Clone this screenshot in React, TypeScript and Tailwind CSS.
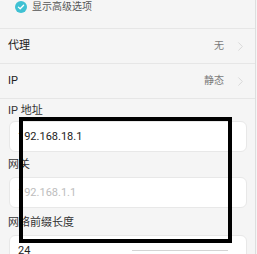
import { FiChevronRight } from "react-icons/fi";

const font = "font-['Roboto','Noto_Sans_CJK_SC',sans-serif]";

type RowProps = { label: string; value: string };

const SettingRow = ({ label, value }: RowProps) => (
    <div className="h-[35px] flex items-center justify-between pl-[8px] pr-[7px] border-b border-[#e6e6e6]">
        <span className="text-[11px] leading-[12px] text-[#222]">{label}</span>
        <div className="flex items-center gap-[9px]">
            <span className="text-[10px] leading-[12px] text-[#7a7a7a]">{value}</span>
            <FiChevronRight className="text-[#d2d2d2] w-[15px] h-[17px]" strokeWidth={1.3} />
        </div>
    </div>
);

type FieldProps = { label: string; value: string; hint?: boolean; labelClass: string };

const Field = ({ label, value, hint, labelClass }: FieldProps) => (
    <div>
        <div className={`pl-[8px] text-[11px] leading-[12px] text-[#333] ${labelClass}`}>{label}</div>
        <div className="ml-[9px] mr-[8px] h-[31px] rounded-[6px] bg-white border border-[#e8e8e8] flex items-center pl-[8px]">
            <span className={`text-[11px] leading-[12px] ${hint ? "text-[#bdbdbd]" : "text-[#222]"}`}>{value}</span>
        </div>
    </div>
);

export default function App() {
    return (
        <div className={`relative w-[257px] h-[254px] overflow-hidden bg-[#f5f5f5] ${font}`}>
            <div className="w-[256px] h-full border-r border-[#dedede]">
                <div className="h-[29px] flex items-start pt-[1px] pl-[15px] gap-[5px] border-b border-[#e6e6e6]">
                    <div className="w-[12px] h-[12px] rounded-full bg-[#3fc1d3] flex items-center justify-center">
                        <svg width="8" height="8" viewBox="0 0 8 8" fill="none">
                            <path d="M1.4 4.1 L3.2 5.8 L6.6 2.2" stroke="white" strokeWidth="1.3" strokeLinecap="round" strokeLinejoin="round" />
                        </svg>
                    </div>
                    <span className="text-[10px] leading-[12px] text-[#555]">显示高级选项</span>
                </div>
                <SettingRow label="代理" value="无" />
                <SettingRow label="IP" value="静态" />
                <Field label="IP 地址" value="192.168.18.1" labelClass="pt-[6px] pb-[4px]" />
                <Field label="网关" value="192.168.1.1" hint labelClass="pt-[7px] pb-[6px]" />
                <Field label="网络前缀长度" value="24" labelClass="pt-[9px] pb-[6px]" />
            </div>

            {/* annotation frame drawn over the screenshot */}
            <div className="absolute left-[19px] top-[117px] w-[213px] h-[126px] border-[4px] border-black" />
            <div className="absolute left-[132px] top-[250px] w-[96px] h-[1px] bg-[#d4d4d4]" />
        </div>
    );
}
